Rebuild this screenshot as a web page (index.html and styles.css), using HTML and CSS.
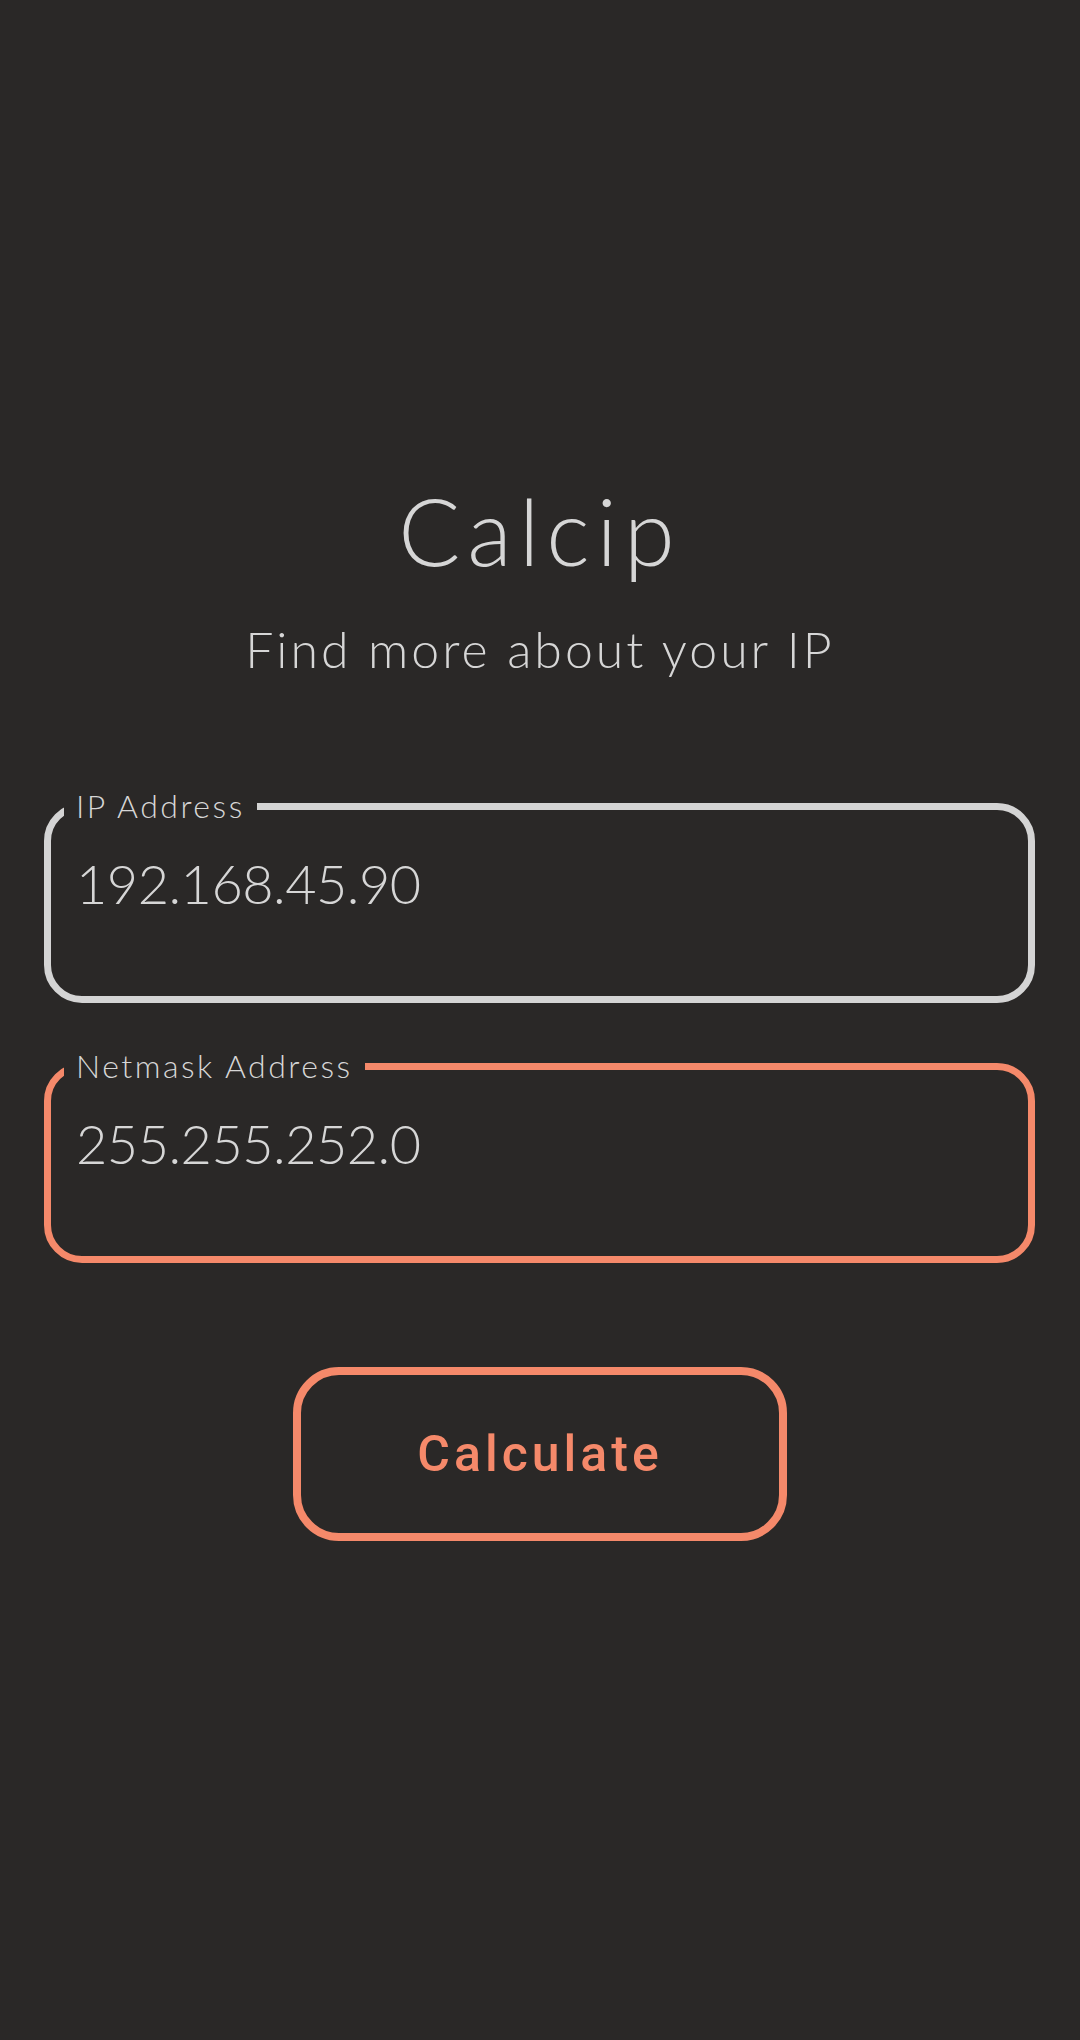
FILE: index.html
```html
<!DOCTYPE html>
<html lang="en">
<head>
<meta charset="utf-8">
<title>Calcip</title>
<link rel="stylesheet" href="styles.css">
</head>
<body>
<main class="app">
  <h1 class="title">Calcip</h1>
  <p class="subtitle">Find more about your IP</p>
  <form class="form">
    <fieldset class="field field-ip">
      <legend class="field-label">IP Address</legend>
      <div class="field-value">192.168.45.90</div>
    </fieldset>
    <fieldset class="field field-mask">
      <legend class="field-label">Netmask Address</legend>
      <div class="field-value">255.255.252.0</div>
    </fieldset>
    <div class="actions">
      <button type="button" class="btn">Calculate</button>
    </div>
  </form>
</main>
</body>
</html>
```
FILE: styles.css
```css
html, body {
  margin: 0;
  padding: 0;
  background: #2a2827;
}
body {
  width: 1080px;
  height: 2040px;
  color: #d6d6d6;
  font-family: "Lato", "Noto Sans", sans-serif;
  font-weight: 300;
}
.app {
  padding-top: 476px;
  display: flex;
  flex-direction: column;
}
.title {
  margin: 0;
  text-align: center;
  font-size: 92px;
  line-height: 110px;
  font-weight: 300;
  letter-spacing: 7px;
}
.subtitle {
  margin: 33px 0 0;
  text-align: center;
  font-size: 50px;
  line-height: 60px;
  letter-spacing: 3px;
}
.form {
  margin-top: 109px;
  display: flex;
  flex-direction: column;
}
.field {
  margin: 0 0 0 44px;
  width: 991px;
  box-sizing: border-box;
  border: 7px solid #d4d4d4;
  border-radius: 38px;
  padding: 28px 0 80px 25px;
  min-inline-size: 0;
}
.field-mask {
  margin-top: 45px;
  border-color: #f5896a;
}
.field-label {
  margin-left: -12px;
  padding: 0 12px;
  font-size: 32px;
  line-height: 36px;
  letter-spacing: 2.5px;
  color: #d6d6d6;
}
.field-value {
  font-size: 54px;
  line-height: 64px;
  letter-spacing: -0.5px;
  color: #d6d6d6;
}
.actions {
  margin-top: 104px;
  display: flex;
  justify-content: center;
}
.btn {
  width: 494px;
  height: 174px;
  box-sizing: border-box;
  border: 8px solid #f5896a;
  border-radius: 46px;
  background: transparent;
  color: #f5896a;
  font-family: "Roboto", sans-serif;
  font-weight: 500;
  font-size: 50px;
  letter-spacing: 4px;
  padding: 0;
}
```
